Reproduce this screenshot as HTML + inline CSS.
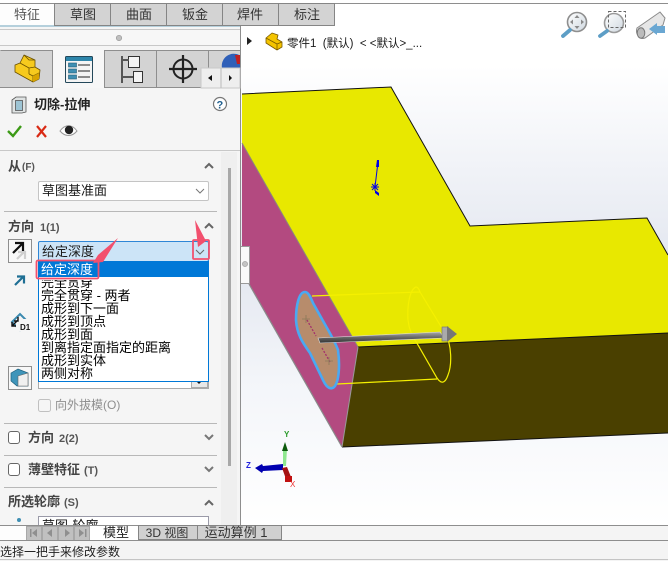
<!DOCTYPE html>
<html lang="zh"><head><meta charset="utf-8"><title>切除-拉伸</title>
<style>
html,body{margin:0;padding:0;width:668px;height:561px;overflow:hidden;background:#fff}
svg{display:block}
text{font-family:"Liberation Sans","Noto Sans CJK SC",sans-serif;font-size:13px;fill:#1a1a1a;white-space:pre}
.b{font-weight:700;fill:#444}
.s{font-size:11px;font-weight:700;fill:#555}
.t{font-size:13px;fill:#333;text-anchor:middle}
.i{font-size:13px;fill:#000}
</style></head><body>
<svg width="668" height="561" viewBox="0 0 668 561" xmlns="http://www.w3.org/2000/svg">
<defs>
<linearGradient id="bg" x1="0" y1="0" x2="0" y2="1"><stop offset="0" stop-color="#fff"/><stop offset=".12" stop-color="#fff"/><stop offset=".5" stop-color="#e3e7f0"/><stop offset=".72" stop-color="#f3f5f9"/><stop offset="1" stop-color="#fff"/></linearGradient>
<linearGradient id="shaft" x1="0" y1="0" x2="0" y2="1"><stop offset="0" stop-color="#aaa"/><stop offset=".5" stop-color="#666"/><stop offset="1" stop-color="#333"/></linearGradient>
<linearGradient id="lens" x1="0" y1="0" x2="1" y2="1"><stop offset="0" stop-color="#fff"/><stop offset="1" stop-color="#cfd8e0"/></linearGradient>
</defs>

<!-- graphics area -->
<rect x="241" y="3" width="427" height="522" fill="url(#bg)"/>
<polygon points="242,94 391,87 470,226 647,218 668,255 668,333 358,347 242,143" fill="#e8e800"/>
<polyline points="242,94 391,87 470,226 647,218 668,255" fill="none" stroke="#111" stroke-width="1"/>
<polygon points="242,143 358,347 342,447 242,272" fill="#b34a80"/>
<polyline points="242,143 358,347" fill="none" stroke="#8b8b78" stroke-width="1"/>
<polyline points="249,284 342,447" fill="none" stroke="#8a8a8a" stroke-width="1.2"/>
<polygon points="358,347 668,333 668,433 342,447" fill="#4a4000"/>
<polyline points="358,347 668,333" fill="none" stroke="#111" stroke-width="1"/>
<polyline points="342,447 668,433" fill="none" stroke="#111" stroke-width="1"/>
<line x1="358" y1="347" x2="342" y2="447" stroke="#999" stroke-width="1"/>

<!-- sketch marker -->
<g fill="#0000e6" stroke="#0000e6">
<line x1="378" y1="162" x2="375" y2="187" stroke-width="1"/>
<polygon points="377,160 379,160 379,167 376,167" stroke="none"/>
<polygon points="375,190 379,193 379,196 375,193" stroke="none"/>
<path d="M372 184l6 6M378 184l-6 6M375 183v8M371 187h8" stroke-width="1" fill="none"/>
</g>

<!-- extrude preview -->
<g fill="none" stroke="#f5f000" stroke-width="1.2">
<line x1="312" y1="296" x2="420" y2="292"/>
<line x1="337" y1="384" x2="437" y2="379"/>
<line x1="303" y1="341" x2="318" y2="341"/>
<path d="M416 287C410 289 407 305 408 320C409 330 413 338 418 345L437 378C441 384 445 384 448 375C452 365 452 345 445 333L420 292C419 289 418 287 416 287Z"/>
</g>
<path d="M305 292C299 292 296 305 296 320C297 335 303 343 310 353L323 380C327 389 332 390 335 386C339 380 340 365 338 350C335 342 331 335 327 328L313 303C310 296 308 292 305 292Z" fill="#b78c6c" stroke="#4aa9f2" stroke-width="2.6"/>
<path d="M307 320L316 336M322 348L330 362" stroke="#a3306c" stroke-width="1.3" stroke-dasharray="2 1.500" fill="none"/>
<path d="M302 319h8M306 315v8M325 361h8M329 357v8" stroke="#8a7a5a" stroke-width=".8"/>
<polygon points="318,338 440,332 444,338 320,343" fill="url(#shaft)" stroke="#ddd" stroke-width=".6"/>
<rect x="442" y="327" width="6" height="14" fill="#aaa" stroke="#777" stroke-width=".7"/>
<polygon points="447,326 457,334 447,342" fill="#777"/>

<!-- triad -->
<g>
<polygon points="283,449 287,449 286,466 283,466" fill="#8fe88f"/>
<polygon points="285,442 288,451 282,451" fill="#0c5a0c"/>
<polygon points="255,468 262,464 263,466 283,464 283,470 263,471 262,473" fill="#0000b0"/>
<polygon points="282,468 287,467 291,477 286,479" fill="#a51212"/>
<rect x="285" y="476" width="7" height="6" fill="#c01010"/>
<text x="284" y="437" style="font-size:8px;fill:#2a9a2a;font-weight:700">Y</text>
<text x="246" y="468" style="font-size:8px;fill:#2222dd;font-weight:700">Z</text>
<text x="290" y="487" style="font-size:8px;fill:#e33">X</text>
</g>

<!-- top-right heads-up icons -->
<g>
<circle cx="577" cy="22" r="9.500" fill="url(#lens)" stroke="#8e8e8e" stroke-width="1.600"/>
<path d="M577 15l2.500 3h-5zM577 29l2.500-3h-5zM570 22l3-2.500v5zM584 22l-3-2.500v5z" fill="#8a8a8a"/>
<line x1="570" y1="30" x2="563" y2="36" stroke="#5d9ec6" stroke-width="3.800" stroke-linecap="round"/>
<circle cx="614" cy="23" r="9.500" fill="url(#lens)" stroke="#9a9a9a" stroke-width="1.600"/>
<rect x="608.500" y="11.500" width="17" height="16" fill="none" stroke="#666" stroke-dasharray="3 2"/>
<line x1="607" y1="31" x2="600" y2="36" stroke="#5d9ec6" stroke-width="3.800" stroke-linecap="round"/>
<path d="M637 28L660 12L665 18L663 25L645 38C640 40 635 34 637 28Z" fill="#e6e6e6" stroke="#8a8a8a"/>
<ellipse cx="641" cy="33" rx="3.800" ry="5.200" fill="#bbb" stroke="#777"/>
<polygon points="649,29 657,23 657,26 665,26 665,33 657,33 657,35" fill="#6aa7d2"/>
</g>

<!-- tree -->
<polygon points="247,37 252,41 247,45" fill="#222"/>
<g stroke="#7a5a00" stroke-width=".8" stroke-linejoin="round">
<polygon points="266,38 272,33 278,35 277,39 282,42 282,47 277,50 266,43" fill="#f4c400"/>
<path d="M266 38l11 6 5-2M277 44v6" fill="none"/>
</g>
<text x="287" y="47" style="font-size:11.500px" fill="#111">零件1  (默认)  &lt; &lt;默认&gt;_...</text>

<!-- left panel -->
<rect x="0" y="25" width="240" height="500" fill="#f5f5f5"/>
<rect x="0" y="25" width="240" height="2" fill="#b5d0dc"/>
<rect x="0" y="29" width="240" height="1" fill="#c8c8c8"/>
<rect x="0" y="30" width="240" height="15" fill="#f7f7f7"/>
<rect x="0" y="45" width="240" height="1" fill="#c8c8c8"/>
<circle cx="119" cy="38" r="2.700" fill="#c0c0c0" stroke="#999" stroke-width=".7"/>
<line x1="240.500" y1="3" x2="240.500" y2="525" stroke="#8e8e8e"/>

<!-- top tabs -->
<rect x="0" y="0" width="668" height="3" fill="#fff"/>
<rect x="0" y="3" width="668" height="1" fill="#8e8e8e"/>
<rect x="0" y="4" width="54" height="21" fill="#fdfdfd"/>
<g fill="#d3d3d3" stroke="#858585">
<rect x="54.500" y="3.500" width="56" height="22"/>
<rect x="110.500" y="3.500" width="56" height="22"/>
<rect x="166.500" y="3.500" width="56" height="22"/>
<rect x="222.500" y="3.500" width="56" height="22"/>
<rect x="278.500" y="3.500" width="56" height="22"/>
</g>
<text class="t" x="27" y="19" style="fill:#555">特征</text>
<text class="t" x="83" y="19">草图</text>
<text class="t" x="139" y="19">曲面</text>
<text class="t" x="195" y="19">钣金</text>
<text class="t" x="250" y="19">焊件</text>
<text class="t" x="307" y="19">标注</text>

<!-- manager tabs -->
<rect x="0" y="50" width="240" height="38" fill="#d3d3d3"/>
<rect x="53" y="50" width="51" height="38" fill="#f7f7f7"/>
<g stroke="#8e8e8e" fill="none">
<path d="M0.500 50.500H53M104 50.500H240"/>
<path d="M0 87.500H53M104.500 87.500H240"/>
<path d="M52.500 50V88M104.500 50V88M156.500 50V88M208.500 50V88"/>
</g>
<g stroke="#6a5000" stroke-width=".8" stroke-linejoin="round">
<polygon points="15,65 20,63 24,55 35,60 35,67 40,70 39,79 33,82 15,72" fill="#f6ca1e"/>
<path d="M20 63l9 5v6M29 68l6-1M29 74l4 2 6-3M33 76v6M24 55l5 5 6 0" fill="none"/>
<polygon points="33,76 39,73 39,79 33,82" fill="#d9a400" stroke="none"/>
</g>
<rect x="65.500" y="56.500" width="27" height="26" rx="1" fill="#f4f4f4" stroke="#24485a"/>
<rect x="66" y="57" width="26" height="4" fill="#2e86ab"/>
<g fill="#3f8fb3" stroke="#1f5a74" stroke-width=".6"><rect x="68.500" y="63" width="8" height="4"/><rect x="68.500" y="69" width="8" height="4"/><rect x="68.500" y="75" width="8" height="4"/></g>
<path d="M78 65h12M78 71h12M78 77h12" stroke="#222"/>
<g fill="#f4f4f4" stroke="#333">
<rect x="128.500" y="56.500" width="11" height="11"/><rect x="133.500" y="71.500" width="9" height="11"/>
<path d="M122 56v27M122 60h7M122 77h11" fill="none" stroke="#555" stroke-width="2"/>
</g>
<circle cx="183" cy="69" r="9.500" fill="none" stroke="#222" stroke-width="2"/>
<path d="M169 69h28M183 55v28" stroke="#222" stroke-width="2.200"/>
<path d="M222 68A12 12 0 0 1 240 55.500V68Z" fill="#2f5fb8"/>
<path d="M235 55l5 0v9h-3z" fill="#c02020"/>
<rect x="201" y="68" width="39" height="20" fill="#eee" stroke="#c8c8c8"/>
<line x1="221" y1="68" x2="221" y2="88" stroke="#bbb"/>
<polygon points="208,78 212,75 212,81" fill="#111"/>
<polygon points="232,78 229,75 229,81" fill="#111"/>

<!-- title -->
<g stroke="#555" stroke-width=".8"><path d="M12 100l4-3h10v15l-4 1H12z" fill="#dfe3e3"/><rect x="15.500" y="100.500" width="7" height="10" fill="#9dc4d4"/></g>
<text x="34" y="109" style="font-weight:700;font-size:13px;fill:#222">切除-拉伸</text>
<circle cx="220" cy="104" r="6.500" fill="#fff" stroke="#777" stroke-width="1.200"/>
<text x="216.500" y="108.500" style="font-size:11px;font-weight:700;fill:#1f5f8f">?</text>
<path d="M8 131l5 5 8-10" fill="none" stroke="#3c9a16" stroke-width="2.400"/>
<path d="M37 126l9 11M46 126l-9 11" fill="none" stroke="#d92a14" stroke-width="2.200"/>
<path d="M60 131c5-7 12-7 17 0c-5 6-12 6-17 0z" fill="#fff" stroke="#999"/>
<circle cx="69" cy="130" r="4.200" fill="#222"/>

<!-- right strip + scrollbar -->
<rect x="0" y="150" width="240" height="1" fill="#c8c8c8"/>
<rect x="221" y="152" width="16" height="373" fill="#efefef"/>
<rect x="228" y="168" width="3" height="298" fill="#a8a8a8"/>
<rect x="241" y="246" width="8" height="37" fill="#fafafa"/>
<path d="M241 246.500H249.500V283.500H241" fill="none" stroke="#9a9a9a"/>
<circle cx="245" cy="264" r="2.600" fill="#c4c4c4" stroke="#999" stroke-width=".6"/>

<!-- sections -->
<text class="b" x="8" y="171" style="font-size:13px">从</text><text class="s" x="22" y="170" style="font-size:10px">(F)</text>
<path d="M205 168l4-4 4 4" fill="none" stroke="#666" stroke-width="2"/>
<rect x="38.500" y="181.500" width="170" height="19" rx="1.500" fill="#fff" stroke="#c4c4c4"/>
<text x="42" y="195">草图基准面</text>
<path d="M196 189l4 4 4-4" fill="none" stroke="#777"/>
<line x1="4" y1="211.500" x2="217" y2="211.500" stroke="#b8b8b8"/>

<text class="b" x="8" y="231">方向</text><text class="s" x="40" y="231">1(1)</text>
<path d="M205 228l4-4 4 4" fill="none" stroke="#666" stroke-width="2"/>
<rect x="8.500" y="239.500" width="23" height="23" fill="#f8f8f8" stroke="#8e8e8e"/>
<path d="M17 259l8-8M18 252h7v7" fill="none" stroke="#cfcfcf" stroke-width="2.200"/>
<path d="M13 253l9-9M15 243h8v8" fill="none" stroke="#111" stroke-width="2.200"/>
<rect x="38.500" y="241.500" width="170" height="20" rx="1.500" fill="#cce4f7" stroke="#2e86d6"/>
<text x="42" y="256">给定深度</text>
<path d="M196 250l4 4 4-4" fill="none" stroke="#666"/>

<path d="M15 285l8-8M17 276.500h7v7" fill="none" stroke="#1f6f94" stroke-width="2.200"/>
<path d="M12 322l8-8l8 8l-8 8z" fill="none" stroke="#3c8ab0" stroke-width="2"/>
<rect x="16" y="319" width="14" height="12" fill="#f5f5f5"/>
<path d="M12 326l6-6M12 322v4h4M18 317v4h-4" fill="none" stroke="#111" stroke-width="1.400"/>
<text x="20" y="330" style="font-size:8px;fill:#111;font-weight:700">D1</text>

<!-- select behind the list -->
<rect x="38.500" y="375.500" width="170" height="13" fill="#fff" stroke="#aaa"/>
<rect x="191.500" y="378.500" width="16" height="9" fill="#e8e8e8" stroke="#aaa"/>
<polygon points="196,381 202,381 199,384" fill="#111"/>
<rect x="8.500" y="366.500" width="23" height="23" fill="#f8f8f8" stroke="#8e8e8e"/>
<polygon points="11,373 18,369 28,373 28,386 17,386 11,381" fill="#3f95ba" stroke="#1d5f7c" stroke-width=".7"/>
<polygon points="18,376 28,373 28,386 18,386" fill="#f0f0f0" stroke="#666" stroke-width=".6"/>

<!-- dropdown list -->
<rect x="38.500" y="261.500" width="170" height="120" fill="#fff" stroke="#0078d7"/>
<text class="i" x="41" y="287">完全贯穿</text>
<rect x="39" y="262" width="169" height="15" fill="#0078d7"/>
<rect x="39" y="277" width="169" height="3" fill="#fff"/>
<text x="41" y="274" style="fill:#fff">给定深度</text>
<g class="list">
<text class="i" x="41" y="300">完全贯穿 - 两者</text>
<text class="i" x="41" y="313">成形到下一面</text>
<text class="i" x="41" y="326">成形到顶点</text>
<text class="i" x="41" y="339">成形到面</text>
<text class="i" x="41" y="352">到离指定面指定的距离</text>
<text class="i" x="41" y="365">成形到实体</text>
<text class="i" x="41" y="378">两侧对称</text>
</g>

<!-- red annotations -->
<rect x="36.500" y="260.500" width="62" height="18" rx="1.500" fill="none" stroke="#f2506e" stroke-width="1.800"/>
<rect x="193" y="240" width="16" height="19" rx="1" fill="none" stroke="#f2506e" stroke-width="1.800"/>
<polygon points="118,238 103,262 93,263 98,255" fill="#f2506e"/>
<polygon points="195,220 206,241 198,247" fill="#f2506e"/>

<!-- lower sections -->
<rect x="38.500" y="399.500" width="12" height="12" rx="2" fill="#f5f5f5" stroke="#c0c0c0"/>
<text x="55" y="409" style="font-size:12px;fill:#8e8e8e">向外拔模(O)</text>
<line x1="4" y1="423.500" x2="217" y2="423.500" stroke="#b8b8b8"/>
<rect x="8.500" y="431.500" width="11" height="12" rx="2.500" fill="#fff" stroke="#666"/>
<text class="b" x="28" y="442">方向</text><text class="s" x="59" y="442">2(2)</text>
<path d="M205 435l4 4 4-4" fill="none" stroke="#777" stroke-width="2"/>
<line x1="4" y1="455.500" x2="217" y2="455.500" stroke="#b8b8b8"/>
<rect x="8.500" y="463.500" width="11" height="12" rx="2.500" fill="#fff" stroke="#666"/>
<text class="b" x="28" y="474">薄壁特征</text><text class="s" x="84" y="474">(T)</text>
<path d="M205 467l4 4 4-4" fill="none" stroke="#777" stroke-width="2"/>
<line x1="4" y1="487.500" x2="217" y2="487.500" stroke="#b8b8b8"/>
<text class="b" x="8" y="506">所选轮廓</text><text class="s" x="64" y="506">(S)</text>
<path d="M205 505l4-4 4 4" fill="none" stroke="#666" stroke-width="2"/>
<rect x="38.500" y="516.500" width="170" height="14" fill="#fff" stroke="#9a9aa8"/>
<text x="42" y="530">草图-轮廓</text>
<circle cx="19" cy="520" r="2" fill="#3f8fb3"/>

<!-- bottom bars -->
<rect x="0" y="525" width="668" height="36" fill="#f4f4f4"/>
<rect x="0" y="525" width="668" height="1" fill="#8e8e8e"/>
<rect x="0" y="526" width="90" height="14" fill="#fdfdfd"/>
<rect x="26" y="526" width="64" height="14" fill="#a8a8a8"/>
<g fill="#8f8f8f"><rect x="27" y="527" width="14" height="13" fill="#c0c0c0"/><rect x="43" y="527" width="14" height="13" fill="#c0c0c0"/><rect x="59" y="527" width="14" height="13" fill="#c0c0c0"/><rect x="75" y="527" width="14" height="13" fill="#c0c0c0"/>
<path d="M32 533l5-4v8zM30 529h1.500v8H30zM47 533l5-4v8zM70 533l-5-4v8zM84 533l-5-4v8zM85 529h1.500v8H85z"/></g>
<rect x="90" y="526" width="48" height="14" fill="#fff"/>
<rect x="138.500" y="525.500" width="59" height="14" fill="#d0d0d0" stroke="#858585"/>
<rect x="197.500" y="525.500" width="84" height="14" fill="#d0d0d0" stroke="#858585"/>
<text class="t" x="116" y="537" style="fill:#222">模型</text>
<text class="t" x="167" y="537" style="font-size:12px">3D 视图</text>
<text class="t" x="236" y="537" style="font-size:13px">运动算例 1</text>
<rect x="0" y="540" width="668" height="1" fill="#8e8e8e"/>
<text x="0" y="556" style="font-size:12px;fill:#222">选择一把手来修改参数</text>
<rect x="0" y="559" width="668" height="1" fill="#c4c4c4"/>
</svg>
</body></html>
